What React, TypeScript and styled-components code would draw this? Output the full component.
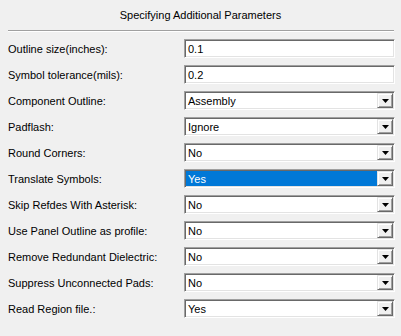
import React from "react";
import styled, { createGlobalStyle } from "styled-components";

const rows = [
  { label: "Outline size(inches):", kind: "text", value: "0.1" },
  { label: "Symbol tolerance(mils):", kind: "text", value: "0.2" },
  { label: "Component Outline:", kind: "combo", value: "Assembly" },
  { label: "Padflash:", kind: "combo", value: "Ignore" },
  { label: "Round Corners:", kind: "combo", value: "No" },
  { label: "Translate Symbols:", kind: "combo", value: "Yes", selected: true },
  { label: "Skip Refdes With Asterisk:", kind: "combo", value: "No" },
  { label: "Use Panel Outline as profile:", kind: "combo", value: "No" },
  { label: "Remove Redundant Dielectric:", kind: "combo", value: "No" },
  { label: "Suppress Unconnected Pads:", kind: "combo", value: "No" },
  { label: "Read Region file.:", kind: "combo", value: "Yes" },
];

type Row = (typeof rows)[number];

const GlobalStyle = createGlobalStyle`
  html, body {
    margin: 0;
    padding: 0;
    background: #f0f0f0;
  }
`;

const Panel = styled.div`
  width: 401px;
  height: 336px;
  box-sizing: border-box;
  background: #f0f0f0;
  font-family: "Liberation Sans", Arial, sans-serif;
  font-size: 11px;
  color: #000;
  display: flex;
  flex-direction: column;
`;

const Title = styled.div`
  height: 30px;
  display: flex;
  align-items: center;
  justify-content: center;
  padding-bottom: 1px;
  box-sizing: border-box;
`;

const Separator = styled.div`
  margin: 0 8px 0 8px;
  width: 386px;
  height: 1px;
  background: #a0a0a0;
  box-shadow: 0 1px 0 #ffffff;
`;

const Form = styled.div`
  display: grid;
  grid-template-columns: 176px 211px;
  row-gap: 7px;
  padding: 8px 0 0 8px;
`;

const Label = styled.div`
  height: 19px;
  display: flex;
  align-items: center;
  white-space: nowrap;
`;

const Field = styled.div`
  height: 19px;
  box-sizing: border-box;
  border: 1px solid;
  border-color: #a0a0a0 #ffffff #ffffff #a0a0a0;
  box-shadow: inset 1px 1px 0 #696969, inset -1px -1px 0 #e3e3e3;
  background: #fff;
  display: flex;
  align-items: stretch;
  padding: 1px;
`;

const Value = styled.div<{ $selected?: boolean }>`
  flex: 1;
  display: flex;
  align-items: center;
  padding-left: 2px;
  background: ${({ $selected }) => ($selected ? "#0078d7" : "transparent")};
  color: ${({ $selected }) => ($selected ? "#ffffff" : "#000000")};
`;

const DropButton = styled.div`
  width: 16px;
  box-sizing: border-box;
  background: #f0f0f0;
  border: 1px solid;
  border-color: #e3e3e3 #696969 #696969 #e3e3e3;
  box-shadow: inset 1px 1px 0 #ffffff, inset -1px -1px 0 #a0a0a0;
  display: flex;
  align-items: center;
  justify-content: center;
`;

function Arrow() {
  return (
    <svg width="7" height="4" viewBox="0 0 7 4">
      <path d="M0 0H7L3.5 4Z" fill="#000" />
    </svg>
  );
}

function FieldRow({ row }: { row: Row }) {
  return (
    <>
      <Label>{row.label}</Label>
      <Field>
        <Value $selected={row.selected}>{row.value}</Value>
        {row.kind === "combo" && (
          <DropButton>
            <Arrow />
          </DropButton>
        )}
      </Field>
    </>
  );
}

export default function App() {
  return (
    <>
      <GlobalStyle />
      <Panel>
        <Title>Specifying Additional Parameters</Title>
        <Separator />
        <Form>
          {rows.map((row, index) => (
            <FieldRow key={index} row={row} />
          ))}
        </Form>
      </Panel>
    </>
  );
}
